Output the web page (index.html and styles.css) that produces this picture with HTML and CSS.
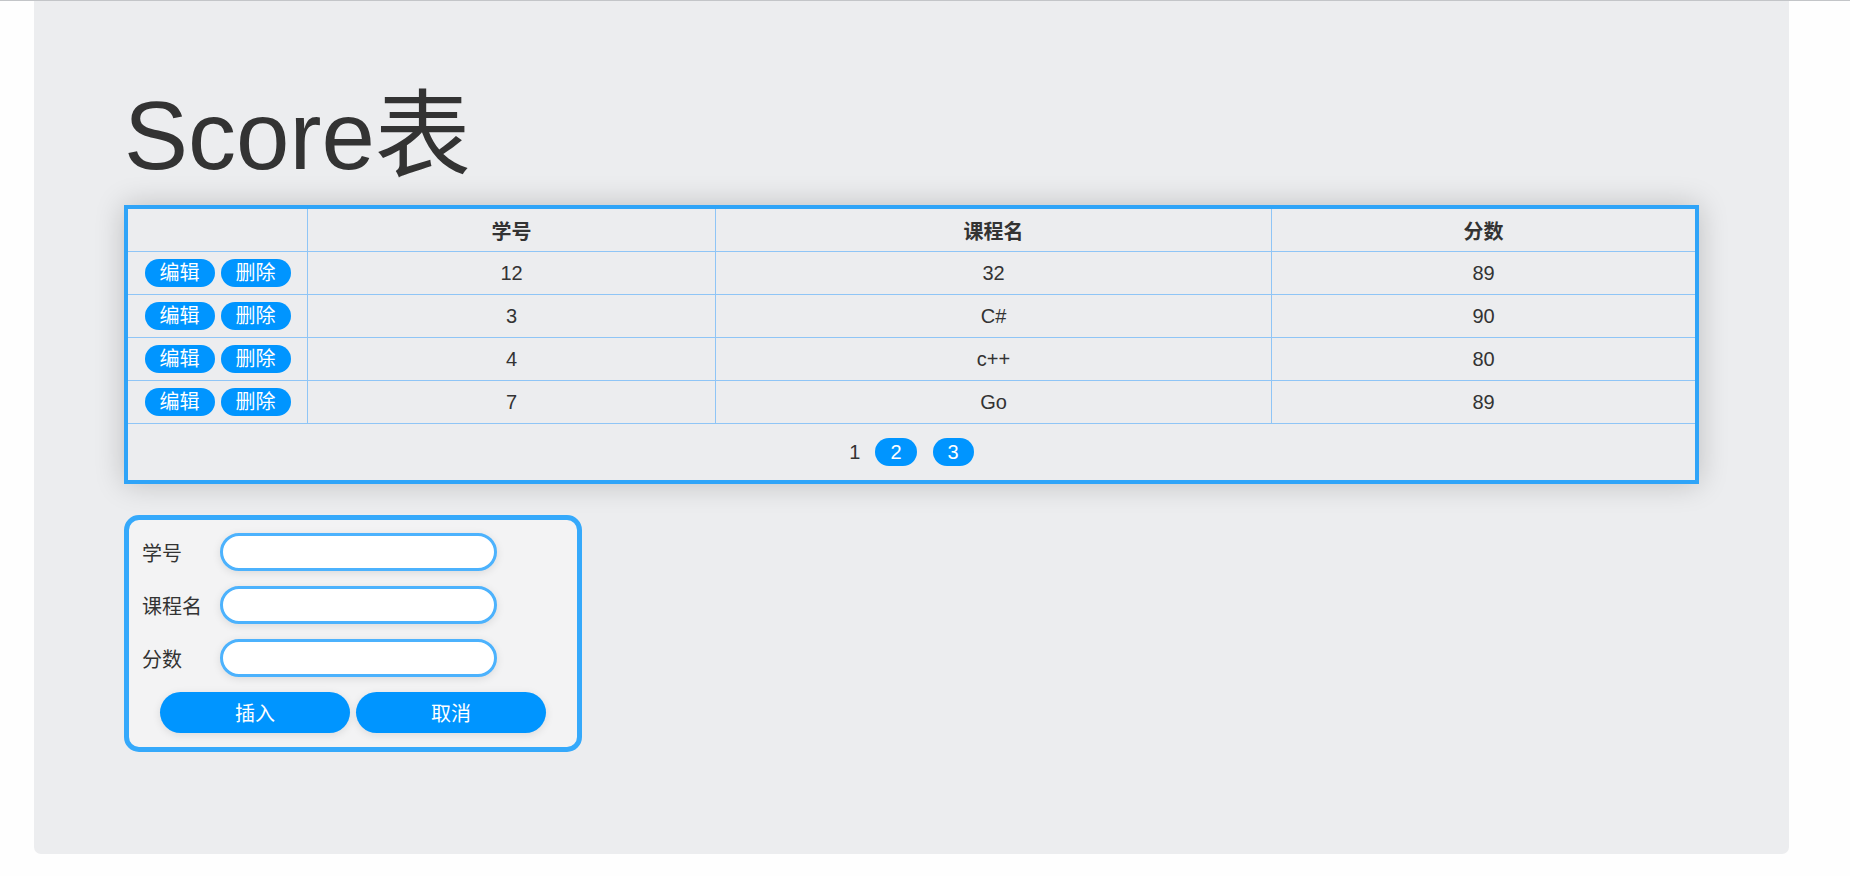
FILE: index.html
```html
<!DOCTYPE html>
<html lang="zh">
<head>
<meta charset="utf-8">
<title>Score表</title>
<link rel="stylesheet" href="styles.css">
</head>
<body>
<div class="page">
  <h1 class="title">Score表</h1>
  <table class="score-table">
    <thead>
      <tr>
        <th class="c-act"></th>
        <th class="c-id">学号</th>
        <th class="c-course">课程名</th>
        <th class="c-score">分数</th>
      </tr>
    </thead>
    <tbody>
      <tr>
        <td class="act"><span class="pill">编辑</span><span class="pill">删除</span></td>
        <td>12</td><td>32</td><td>89</td>
      </tr>
      <tr>
        <td class="act"><span class="pill">编辑</span><span class="pill">删除</span></td>
        <td>3</td><td>C#</td><td>90</td>
      </tr>
      <tr>
        <td class="act"><span class="pill">编辑</span><span class="pill">删除</span></td>
        <td>4</td><td>c++</td><td>80</td>
      </tr>
      <tr>
        <td class="act"><span class="pill">编辑</span><span class="pill">删除</span></td>
        <td>7</td><td>Go</td><td>89</td>
      </tr>
      <tr class="pager-row">
        <td colspan="4">
          <div class="pager">
            <span class="page-cur">1</span>
            <span class="page-btn">2</span>
            <span class="page-btn">3</span>
          </div>
        </td>
      </tr>
    </tbody>
  </table>

  <form class="edit-box">
    <div class="field">
      <label class="lbl">学号</label>
      <input class="inp" type="text">
    </div>
    <div class="field">
      <label class="lbl">课程名</label>
      <input class="inp" type="text">
    </div>
    <div class="field">
      <label class="lbl">分数</label>
      <input class="inp" type="text">
    </div>
    <div class="actions">
      <button type="button" class="big-btn">插入</button>
      <button type="button" class="big-btn">取消</button>
    </div>
  </form>
</div>
</body>
</html>
```

FILE: styles.css
```css
* { box-sizing: border-box; }

html, body {
  margin: 0;
  padding: 0;
  background: #fefefe;
}

body {
  border-top: 1px solid #c3c5c8;
  font-family: "Liberation Sans", "Noto Sans CJK SC", Arial, sans-serif;
  font-size: 20px;
  color: #333;
  height: 876px;
  overflow: hidden;
}

.page {
  width: 1755px;
  margin-left: 34px;
  background: #ecedef;
  border-radius: 0 0 7px 7px;
  padding: 80px 0 102px 90px;
}

.title {
  margin: 0 0 14px 0;
  font-size: 96px;
  font-weight: normal;
  line-height: 110px;
  color: #333;
}

.score-table {
  width: 1575px;
  table-layout: fixed;
  border-collapse: separate;
  border-spacing: 0;
  border: 4px solid #2fa4f8;
  background: #ecedef;
  box-shadow: 0 0 28px rgba(0, 0, 0, 0.2);
  font-size: 20px;
}

.score-table th,
.score-table td {
  height: 43px;
  padding: 0;
  text-align: center;
  vertical-align: middle;
  border-right: 1px solid #8fc5f6;
  border-bottom: 1px solid #8fc5f6;
  color: #333;
}

.score-table th:last-child,
.score-table td:last-child { border-right: none; }

.score-table th { font-weight: bold; }

.c-act { width: 180px; }
.c-id { width: 408px; }
.c-course { width: 556px; }

.act .pill + .pill { margin-left: 6px; }

.pill {
  display: inline-block;
  height: 28px;
  line-height: 28px;
  padding: 0 15px;
  border-radius: 14px;
  background: #0095ff;
  color: #fff;
  font-size: 20px;
  vertical-align: middle;
}

.pager-row td {
  height: 56px;
  border-bottom: none;
}

.pager {
  display: flex;
  justify-content: center;
  align-items: center;
  font-size: 20px;
}

.page-cur {
  margin-right: 15px;
  color: #333;
}

.page-btn {
  height: 28px;
  line-height: 28px;
  padding: 0 15px;
  border-radius: 14px;
  background: #0095ff;
  color: #fff;
}

.page-btn + .page-btn { margin-left: 16px; }

.edit-box {
  width: 458px;
  margin: 31px 0 0 0;
  border: 5px solid #35a9fb;
  border-radius: 15px;
  background: #f3f3f4;
  padding: 13px 0 14px 13px;
  display: flex;
  flex-direction: column;
  gap: 15px;
}

.field {
  display: flex;
  align-items: center;
}

.lbl {
  width: 78px;
  font-size: 20px;
  color: #333;
}

.inp {
  width: 277px;
  height: 38px;
  border: 3px solid #4cb2fd;
  border-radius: 19px;
  background: #fff;
  box-shadow: 0 2px 8px rgba(0, 0, 0, 0.1);
  outline: none;
  padding: 0 12px;
  font-size: 18px;
}

.actions {
  display: flex;
  justify-content: center;
  gap: 6px;
  margin-left: -13px;
}

.big-btn {
  width: 190px;
  height: 41px;
  border: none;
  border-radius: 21px;
  background: #0095ff;
  color: #fff;
  font-family: "Liberation Sans", "Noto Sans CJK SC", Arial, sans-serif;
  font-size: 20px;
  box-shadow: 0 2px 8px rgba(0, 0, 0, 0.1);
  cursor: pointer;
}
```
